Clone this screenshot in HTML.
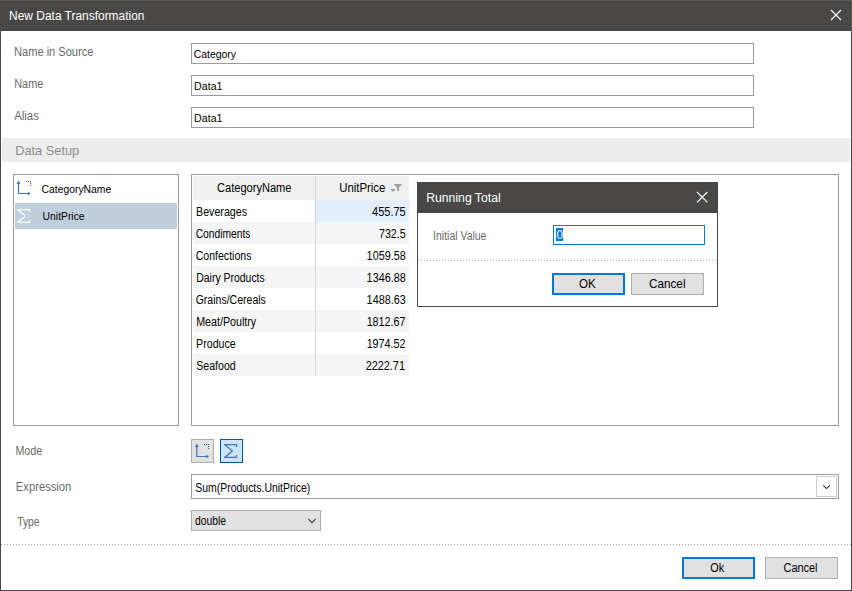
<!DOCTYPE html>
<html lang="en"><head><meta charset="utf-8"><title>New Data Transformation</title>
<style>
html,body{margin:0;padding:0;}
body{width:852px;height:591px;overflow:hidden;background:#fff;position:relative;font-family:"Liberation Sans",sans-serif;font-size:12px;color:#000;}
*{box-sizing:border-box;}
.abs{position:absolute;}
.t{position:absolute;left:0;display:block;white-space:nowrap;line-height:14px;height:14px;transform-origin:0 0;}
#win{left:0;top:0;width:852px;height:591px;border:1px solid #4a4846;}
.titlebar{background:#4a4846;}
.inp{border:1px solid #9b9b9b;background:#fff;}
.box{border:1px solid #9b9b9b;background:#fff;}
.btn{background:#e1e1e1;border:1px solid #adadad;}
.btnd{background:#e1e1e1;border:2px solid #0078d7;}
.dots{height:1px;background-image:linear-gradient(to right,#a6a6a6 1px,transparent 1px);background-size:3px 1px;}
.row{position:absolute;left:193px;width:216px;height:22px;background:#f5f5f5;}
svg{position:absolute;overflow:visible;}
</style></head><body>

<!-- ===== Main window: New Data Transformation ===== -->
<div class="abs" id="win"></div>
<header>
  <div class="abs titlebar" style="left:0;top:0;width:852px;height:31px;"></div>
  <div class="abs" style="left:0;top:0;width:852px;height:1px;background:#5b5957;"></div>
  <div class="abs" style="left:851px;top:0;width:1px;height:31px;background:#5b5957;"></div>
  <span class="t" id="title" style="top:9px;font-size:12px;color:#fff;transform:translateX(9.11px) scaleX(0.9946)">New Data Transformation</span>
  <svg style="left:826px;top:5px" width="20" height="20" viewBox="826 5 20 20"><path d="M831 10 L841 20 M841 10 L831 20" stroke="#fff" stroke-width="1.15" fill="none"/></svg>
</header>

<!-- ===== Name fields ===== -->
<section>
  <div><span class="t" id="l1" style="top:45px;font-size:12px;color:#6a6a6a;transform:translateX(14.11px) scaleX(0.9208)">Name in Source</span><div class="abs inp" style="left:191px;top:43px;width:563px;height:21px;"></div><span class="t" id="v1" style="top:47px;font-size:11.5px;color:#000;transform:translateX(193.71px) scaleX(0.9056)">Category</span></div>
  <div><span class="t" id="l2" style="top:77px;font-size:12px;color:#6a6a6a;transform:translateX(14.17px) scaleX(0.9106)">Name</span><div class="abs inp" style="left:191px;top:75px;width:563px;height:21px;"></div><span class="t" id="v2" style="top:79px;font-size:11.5px;color:#000;transform:translateX(194.08px) scaleX(0.9268)">Data1</span></div>
  <div><span class="t" id="l3" style="top:109px;font-size:12px;color:#6a6a6a;transform:translateX(14.28px) scaleX(0.9421)">Alias</span><div class="abs inp" style="left:191px;top:107px;width:563px;height:21px;"></div><span class="t" id="v3" style="top:111px;font-size:11.5px;color:#000;transform:translateX(194.08px) scaleX(0.9268)">Data1</span></div>
</section>

<!-- ===== Data Setup section ===== -->
<section>
  <div class="abs" style="left:2px;top:138px;width:848px;height:24px;background:#ededed;"></div>
  <span class="t" id="ds" style="top:144px;font-size:13px;color:#8c8a88;transform:translateX(15.19px) scaleX(0.9842)">Data Setup</span>

  <!-- field list -->
  <div class="abs box" style="left:13px;top:174px;width:166px;height:252px;"></div>
  <div>
    <svg style="left:14px;top:178px" width="20" height="20" viewBox="14 178 20 20"><path d="M18.5 182.5 V193.5 H28.5" fill="none" stroke="#3c77b8" stroke-width="1.2"/><path d="M18.5 180.6 L16.5 183.9 H20.5 Z M30.5 193.5 L27.9 191.5 V195.5 Z" fill="#3c77b8"/><path d="M26 181h1v1h-1z M28 181h1v1h-1z M30 181h1v1h-1z M30 183h1v1h-1z M30 185h1v1h-1z" fill="#555"/></svg>
    <span class="t" id="li1" style="top:182px;font-size:11.5px;color:#000;transform:translateX(41.56px) scaleX(0.9014)">CategoryName</span>
  </div>
  <div>
    <div class="abs" style="left:15px;top:203px;width:162px;height:26px;background:#c1cfdd;"></div>
    <svg style="left:14px;top:206px" width="20" height="20" viewBox="14 206 20 20"><path d="M29.5 212 V209.5 H17.4 L25.6 216 L17.4 222.4 H29.5 V220" fill="none" stroke="#fff" stroke-width="1.25" stroke-linejoin="miter" stroke-miterlimit="1.6"/></svg>
    <span class="t" id="li2" style="top:209px;font-size:11.5px;color:#000;transform:translateX(42.62px) scaleX(0.8994)">UnitPrice</span>
  </div>

  <!-- preview grid -->
  <div class="abs box" style="left:191px;top:174px;width:648px;height:252px;"></div>
  <div>
    <div class="abs" style="left:193px;top:176px;width:216px;height:24px;background:#f0f0f0;"></div>
    <div class="row" style="top:222px;"></div>
    <div class="row" style="top:266px;"></div>
    <div class="row" style="top:310px;"></div>
    <div class="row" style="top:354px;"></div>
    <div class="abs" style="left:316px;top:200px;width:93px;height:22px;background:#e4effd;"></div>
    <div class="abs" style="left:315px;top:176px;width:1px;height:200px;background:#d4d4d4;"></div>
    <div><span class="t" id="h1" style="top:181px;font-size:12px;color:#000;transform:translateX(217.04px) scaleX(0.9226)">CategoryName</span><span class="t" id="h2" style="top:181px;font-size:12px;color:#000;transform:translateX(339.20px) scaleX(0.9475)">UnitPrice</span>
      <svg style="left:388px;top:182px" width="16" height="12" viewBox="388 182 16 12"><path d="M394 184 H402 V184.6 L399 187.4 V191 H397 V187.4 L394 184.6 Z M390.2 189 H395.8 L393 192 Z" fill="#a0a0a0"/></svg>
    </div>
    <div><span class="t" id="c1" style="top:205px;font-size:12px;color:#000;transform:translateX(196.11px) scaleX(0.8864)">Beverages</span><span class="t" id="n1" style="top:205px;font-size:12px;color:#000;transform:translateX(372.11px) scaleX(0.9146)">455.75</span></div>
    <div><span class="t" id="c2" style="top:227px;font-size:12px;color:#000;transform:translateX(195.64px) scaleX(0.8553)">Condiments</span><span class="t" id="n2" style="top:227px;font-size:12px;color:#000;transform:translateX(379.04px) scaleX(0.8865)">732.5</span></div>
    <div><span class="t" id="c3" style="top:249px;font-size:12px;color:#000;transform:translateX(195.67px) scaleX(0.8801)">Confections</span><span class="t" id="n3" style="top:249px;font-size:12px;color:#000;transform:translateX(366.62px) scaleX(0.9033)">1059.58</span></div>
    <div><span class="t" id="c4" style="top:271px;font-size:12px;color:#000;transform:translateX(196.28px) scaleX(0.8699)">Dairy Products</span><span class="t" id="n4" style="top:271px;font-size:12px;color:#000;transform:translateX(366.62px) scaleX(0.9033)">1346.88</span></div>
    <div><span class="t" id="c5" style="top:293px;font-size:12px;color:#000;transform:translateX(195.63px) scaleX(0.8777)">Grains/Cereals</span><span class="t" id="n5" style="top:293px;font-size:12px;color:#000;transform:translateX(366.62px) scaleX(0.9001)">1488.63</span></div>
    <div><span class="t" id="c6" style="top:315px;font-size:12px;color:#000;transform:translateX(196.18px) scaleX(0.8913)">Meat/Poultry</span><span class="t" id="n6" style="top:315px;font-size:12px;color:#000;transform:translateX(366.63px) scaleX(0.8949)">1812.67</span></div>
    <div><span class="t" id="c7" style="top:337px;font-size:12px;color:#000;transform:translateX(196.11px) scaleX(0.8873)">Produce</span><span class="t" id="n7" style="top:337px;font-size:12px;color:#000;transform:translateX(366.63px) scaleX(0.8961)">1974.52</span></div>
    <div><span class="t" id="c8" style="top:359px;font-size:12px;color:#000;transform:translateX(196.25px) scaleX(0.8811)">Seafood</span><span class="t" id="n8" style="top:359px;font-size:12px;color:#000;transform:translateX(365.63px) scaleX(0.9063)">2222.71</span></div>
  </div>
</section>

<!-- ===== Nested dialog: Running Total ===== -->
<section>
  <div class="abs" style="left:417px;top:182px;width:301px;height:125px;background:#fff;border:1px solid #4a4846;"></div>
  <div class="abs titlebar" style="left:417px;top:182px;width:301px;height:31px;"></div>
  <span class="t" id="rt" style="top:191px;font-size:12px;color:#fff;transform:translateX(426.20px) scaleX(1.0178)">Running Total</span>
  <svg style="left:692px;top:187px" width="20" height="20" viewBox="692 187 20 20"><path d="M697 192 L707.4 202.4 M707.4 192 L697 202.4" stroke="#fff" stroke-width="1.15" fill="none"/></svg>
  <span class="t" id="iv" style="top:229px;font-size:12px;color:#6a6a6a;transform:translateX(433.12px) scaleX(0.8714)">Initial Value</span>
  <div class="abs" style="left:553px;top:225px;width:152px;height:20px;border:1px solid #0078d7;background:#fff;"></div>
  <div class="abs" style="left:556px;top:228px;width:7px;height:13px;background:#0078d7;"></div>
  <span class="t" id="zero" style="top:228px;font-size:12.5px;color:#fff;transform:translateX(556.42px) scaleX(0.9360)">0</span>
  <div class="abs dots" style="left:418px;top:260px;width:299px;"></div>
  <div><div class="abs btnd" style="left:552px;top:273px;width:73px;height:22px;"></div><span class="t" id="ok1" style="top:277px;font-size:12px;color:#000;transform:translateX(579.01px) scaleX(0.9637)">OK</span></div>
  <div><div class="abs btn" style="left:631px;top:273px;width:73px;height:22px;"></div><span class="t" id="ca1" style="top:277px;font-size:12px;color:#000;transform:translateX(649.03px) scaleX(0.9761)">Cancel</span></div>
</section>

<!-- ===== Mode / Expression / Type ===== -->
<section>
  <div><span class="t" id="mode" style="top:444px;font-size:12px;color:#6a6a6a;transform:translateX(15.39px) scaleX(0.8946)">Mode</span>
    <div class="abs btn" style="left:191px;top:439px;width:23px;height:24px;"></div>
    <svg style="left:192px;top:441px" width="20" height="20" viewBox="192 441 20 20"><g transform="translate(178.3 263)"><path d="M18.5 182.5 V193.5 H28.5" fill="none" stroke="#3c77b8" stroke-width="1.2"/><path d="M18.5 180.6 L16.5 183.9 H20.5 Z M30.5 193.5 L27.9 191.5 V195.5 Z" fill="#3c77b8"/></g><g transform="translate(178 263)"><path d="M26 181h1v1h-1z M28 181h1v1h-1z M30 181h1v1h-1z M30 183h1v1h-1z M30 185h1v1h-1z" fill="#555"/></g></svg>
    <div class="abs" style="left:220px;top:439px;width:23px;height:24px;background:#cce4f7;border:1px solid #005499;"></div>
    <svg style="left:221px;top:441px" width="20" height="20" viewBox="221 441 20 20"><g transform="translate(207 235)"><path d="M29.5 212 V209.5 H17.4 L25.6 216 L17.4 222.4 H29.5 V220" fill="none" stroke="#3c77b8" stroke-width="1.25" stroke-linejoin="miter" stroke-miterlimit="1.6"/></g></svg>
  </div>
  <div><span class="t" id="expr" style="top:480px;font-size:12px;color:#6a6a6a;transform:translateX(15.80px) scaleX(0.9359)">Expression</span>
    <div class="abs inp" style="left:191px;top:474px;width:648px;height:25px;"></div>
    <span class="t" id="sum" style="top:481px;font-size:12px;color:#000;transform:translateX(195.23px) scaleX(0.8716)">Sum(Products.UnitPrice)</span>
    <div class="abs" style="left:816px;top:476px;width:21px;height:21px;border:1px solid #cfcfcf;background:#fff;"></div>
    <svg style="left:818px;top:480px" width="16" height="14" viewBox="818 480 16 14"><path d="M823.3 485.3 L826.6 488.6 L829.9 485.3" stroke="#333" stroke-width="1.05" fill="none"/></svg>
  </div>
  <div><span class="t" id="type" style="top:515px;font-size:12px;color:#6a6a6a;transform:translateX(17.16px) scaleX(0.8637)">Type</span>
    <div class="abs btn" style="left:191px;top:510px;width:130px;height:21px;"></div>
    <span class="t" id="dbl" style="top:514px;font-size:12px;color:#000;transform:translateX(194.94px) scaleX(0.8633)">double</span>
    <svg style="left:304px;top:514px" width="16" height="14" viewBox="304 514 16 14"><path d="M308.3 518.9 L312 522.6 L315.7 518.9" stroke="#3a3a3a" stroke-width="1.1" fill="none"/></svg>
  </div>
</section>

<!-- ===== Footer buttons ===== -->
<footer>
  <div class="abs dots" style="left:1px;top:544px;width:850px;"></div>
  <div><div class="abs btnd" style="left:682px;top:557px;width:73px;height:22px;"></div><span class="t" id="ok2" style="top:561px;font-size:12px;color:#000;transform:translateX(710.30px) scaleX(0.9077)">Ok</span></div>
  <div><div class="abs btn" style="left:765px;top:557px;width:73px;height:22px;"></div><span class="t" id="ca2" style="top:561px;font-size:12px;color:#000;transform:translateX(783.54px) scaleX(0.9093)">Cancel</span></div>
</footer>
</body></html>
